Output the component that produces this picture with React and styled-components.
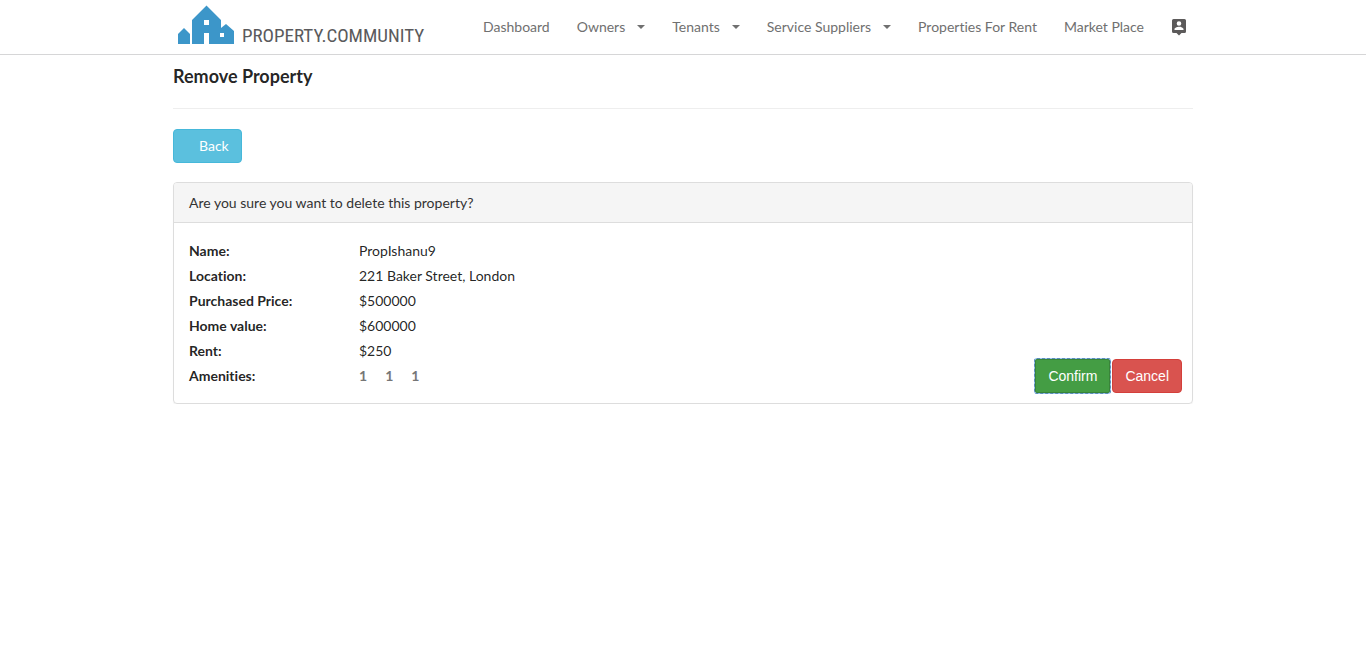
import React from "react";
import styled, { createGlobalStyle } from "styled-components";

const GlobalStyle = createGlobalStyle`
  *, *::before, *::after { box-sizing: border-box; }
  body {
    margin: 0;
    background: #fff;
    color: rgba(0, 0, 0, 0.87);
    font-family: Lato, "Liberation Sans", sans-serif;
    font-size: 14px;
    line-height: 20px;
    font-variant-ligatures: none;
  }
`;

const Header = styled.header`
  border-bottom: 1px solid #d6d6d7;
`;

const Container = styled.div`
  width: 100%;
  max-width: 1050px;
  margin: 0 auto;
  padding: 0 15px;
`;

const HeaderInner = styled(Container)`
  display: flex;
  align-items: center;
  min-height: 54px;
`;

const Brand = styled.a`
  display: flex;
  align-items: flex-end;
  gap: 8px;
  width: 310px;
  height: 40px;
  padding-left: 4px;
  margin-bottom: 4px;
  color: #5a5a5c;
  text-decoration: none;
`;

const BrandName = styled.span`
  font-family: "Liberation Sans Narrow", "Roboto Condensed", "Liberation Sans", sans-serif;
  font-size: 19px;
  line-height: 18px;
`;

const Nav = styled.nav`
  display: flex;
  align-items: center;
  gap: 27px;
`;

const NavLink = styled.a`
  display: flex;
  align-items: center;
  gap: 12px;
  color: #707070;
  white-space: nowrap;
  text-decoration: none;
`;

const Caret = styled.span`
  border: 4px solid transparent;
  border-top-color: currentColor;
  border-bottom: 0;
`;

const Title = styled.h1`
  margin: 0;
  padding: 9px 0 20px;
  border-bottom: 1px solid #eee;
  font-size: 18px;
  font-weight: 700;
  line-height: 24px;
`;

const Button = styled.button`
  height: 34px;
  padding: 0 12px;
  border: 1px solid ${(p) => p.$border};
  border-radius: 4px;
  background: ${(p) => p.$fill};
  color: #fff;
  font-family: "Liberation Sans", sans-serif;
  font-size: 14px;
  line-height: 20px;
  cursor: pointer;
`;

const BackButton = styled(Button)`
  display: block;
  margin: 20px 0 19px;
  padding-left: 25px;
  font-family: Lato, sans-serif;
`;

const ConfirmButton = styled(Button)`
  border-radius: 2px;
  box-shadow: 0 0 0 1px #9cc3f0;
  outline: 1px dashed #5b8fb8;
`;

const Panel = styled.section`
  border: 1px solid #ddd;
  border-radius: 4px;
  box-shadow: 0 1px 1px rgba(0, 0, 0, 0.05);
`;

const PanelHeading = styled.h2`
  margin: 0;
  padding: 10px 15px;
  border-bottom: 1px solid #ddd;
  border-radius: 3px 3px 0 0;
  background: #f5f5f5;
  color: #333;
  font-size: 14px;
  font-weight: 400;
  line-height: 19px;
`;

const PanelBody = styled.div`
  display: flex;
  align-items: flex-end;
  justify-content: space-between;
`;

const Details = styled.dl`
  display: grid;
  grid-template-columns: 170px auto;
  margin: 0;
  padding: 15px;
  line-height: 25px;
`;

const Term = styled.dt`
  font-weight: 700;
`;

const Value = styled.dd`
  margin: 0;
`;

const Amenities = styled(Value)`
  display: flex;
  gap: 18px;
  color: #767676;
  font-weight: 700;
`;

const Actions = styled.div`
  display: flex;
  gap: 2px;
  padding: 10px;
`;

const links = [
  { label: "Dashboard" },
  { label: "Owners", menu: true },
  { label: "Tenants", menu: true },
  { label: "Service Suppliers", menu: true },
  { label: "Properties For Rent" },
  { label: "Market Place" },
];

const details = [
  ["Name:", "PropIshanu9"],
  ["Location:", "221 Baker Street, London"],
  ["Purchased Price:", "$500000"],
  ["Home value:", "$600000"],
  ["Rent:", "$250"],
];

const HousesLogo = () => (
  <svg width="57" height="40" viewBox="0 0 57 40" fill="#3c96c9" aria-hidden="true">
    <path d="M1 39V29l6-6 6 6v10z" />
    <path
      fillRule="evenodd"
      d="M15 39V15L29.500 0.500 44 15v8l5-4 8 7v13H32V28h-5v11zM27 15v5h5v-5zM43 28v4h4v-4z"
    />
  </svg>
);

const AccountIcon = () => (
  <svg width="16" height="18" viewBox="0 0 16 18" aria-hidden="true">
    <path
      fill="#5c5a5a"
      fillRule="evenodd"
      d="M2.500 1h11A1.500 1.500 0 0 1 15 2.500v11a1.500 1.500 0 0 1-1.500 1.500H10.500L8 17.500 5.500 15h-3A1.500 1.500 0 0 1 1 13.500v-11A1.500 1.500 0 0 1 2.500 1zM8 3.200a2.300 2.300 0 1 0 0 4.600 2.300 2.300 0 0 0 0-4.600zM3.500 12h9v-.8c0-1.500-3-2.400-4.500-2.400s-4.500.9-4.500 2.400z"
    />
  </svg>
);

export default function App() {
  return (
    <>
      <GlobalStyle />
      <Header>
        <HeaderInner>
          <Brand href="#">
            <HousesLogo />
            <BrandName>PROPERTY.COMMUNITY</BrandName>
          </Brand>
          <Nav>
            {links.map((link) => (
              <NavLink href="#" key={link.label}>
                {link.label}
                {link.menu && <Caret />}
              </NavLink>
            ))}
            <NavLink href="#" aria-label="Account">
              <AccountIcon />
            </NavLink>
          </Nav>
        </HeaderInner>
      </Header>
      <Container as="main">
        <Title>Remove Property</Title>
        <BackButton type="button" $fill="#5bc0de" $border="#46b8da">
          Back
        </BackButton>
        <Panel>
          <PanelHeading>Are you sure you want to delete this property?</PanelHeading>
          <PanelBody>
            <Details>
              {details.map(([term, value]) => (
                <React.Fragment key={term}>
                  <Term>{term}</Term>
                  <Value>{value}</Value>
                </React.Fragment>
              ))}
              <Term>Amenities:</Term>
              <Amenities>
                <span>1</span>
                <span>1</span>
                <span>1</span>
              </Amenities>
            </Details>
            <Actions>
              <ConfirmButton type="button" $fill="#449d44" $border="#398439">
                Confirm
              </ConfirmButton>
              <Button type="button" $fill="#d9534f" $border="#d43f3a">
                Cancel
              </Button>
            </Actions>
          </PanelBody>
        </Panel>
      </Container>
    </>
  );
}
